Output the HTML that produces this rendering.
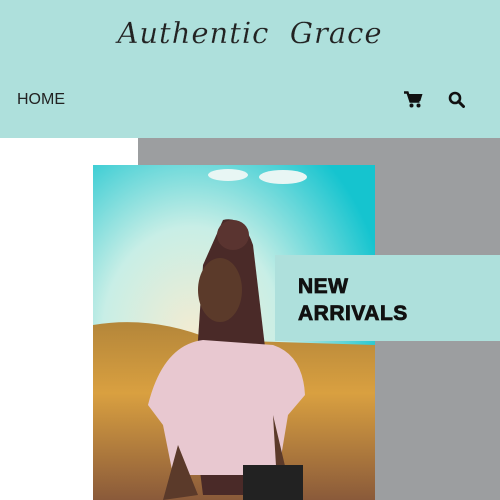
<!DOCTYPE html>
<html><head><meta charset="utf-8"><style>
body{margin:0;width:500px;height:500px;overflow:hidden;background:#fff;font-family:"Liberation Sans",sans-serif;position:relative}
.hdr{position:absolute;left:0;top:0;width:500px;height:138px;background:#aee0dc}
.logo{position:absolute;left:0;width:500px;top:16px;text-align:center;font-family:"DejaVu Serif",serif;font-style:italic;font-size:29px;color:#222;letter-spacing:1px;font-weight:200;-webkit-text-stroke:0.2px #aee0dc}
.home{position:absolute;left:17px;top:91px;font-size:16px;color:#222}
.gray{position:absolute;left:138px;top:138px;width:362px;height:362px;background:#9c9ea0}
.photo{position:absolute;left:93px;top:165px;width:282px;height:335px}
.box{position:absolute;left:275px;top:255px;width:225px;height:86px;background:#aee0dc}
.box div{position:absolute;left:23px;top:18px;font-weight:bold;font-size:21px;line-height:27px;color:#111;letter-spacing:.5px;-webkit-text-stroke:0.8px #111}
</style></head><body>
<div class="hdr">
<div class="logo">Authentic&nbsp; Grace</div>
<div class="home">HOME</div>
<svg style="position:absolute;left:404px;top:91px" width="19" height="17" viewBox="0 0 19 17"><path d="M0 1.5h3.5l3 9h9" fill="none" stroke="#111" stroke-width="2.4"/><path d="M4.5 3h14l-2.2 7H7z" fill="#111"/><circle cx="7.5" cy="14.5" r="2" fill="#111"/><circle cx="14.5" cy="14.5" r="2" fill="#111"/></svg>
<svg style="position:absolute;left:448px;top:91px" width="17" height="17" viewBox="0 0 17 17"><circle cx="7" cy="7" r="5" fill="none" stroke="#111" stroke-width="2.6"/><path d="M10.5 10.5l5 5" stroke="#111" stroke-width="3" stroke-linecap="round"/></svg>
</div>
<div class="gray"></div>
<svg class="photo" viewBox="0 0 282 335" preserveAspectRatio="none">
<defs>
<radialGradient id="sky" cx="35%" cy="50%" r="70%"><stop offset="0" stop-color="#f2ecd2"/><stop offset=".45" stop-color="#c8eee6"/><stop offset="1" stop-color="#15c4cf"/></radialGradient>
<linearGradient id="gr" x1="0" y1="0" x2="0" y2="1"><stop offset="0" stop-color="#b4863a"/><stop offset=".4" stop-color="#d9a040"/><stop offset="1" stop-color="#8a5a3a"/></linearGradient>
</defs>
<rect width="282" height="335" fill="url(#sky)"/>
<ellipse cx="135" cy="10" rx="20" ry="6" fill="#e8f6f4"/><ellipse cx="190" cy="12" rx="24" ry="7" fill="#e8f6f4"/>
<path d="M0 160 Q60 150 120 175 L282 180 L282 335 L0 335z" fill="url(#gr)"/>
<path d="M130 55 Q150 50 160 80 L180 250 L170 330 L110 330 L100 250 L110 100z" fill="#4a2a28"/>
<ellipse cx="140" cy="70" rx="16" ry="15" fill="#5a3430"/>
<ellipse cx="127" cy="125" rx="22" ry="32" fill="#5b3a2a"/>
<path d="M55 240 Q70 180 110 175 L180 180 Q210 190 212 230 L195 250 L185 310 L80 310 L70 260z" fill="#e8c8d0"/>
<path d="M85 280 L105 330 L70 335z M180 250 L185 335 L200 335z" fill="#5b3a2a"/>
<rect x="150" y="300" width="60" height="35" fill="#222"/>
</svg>
<div class="box"><div>NEW<br>ARRIVALS</div></div>
</body></html>
